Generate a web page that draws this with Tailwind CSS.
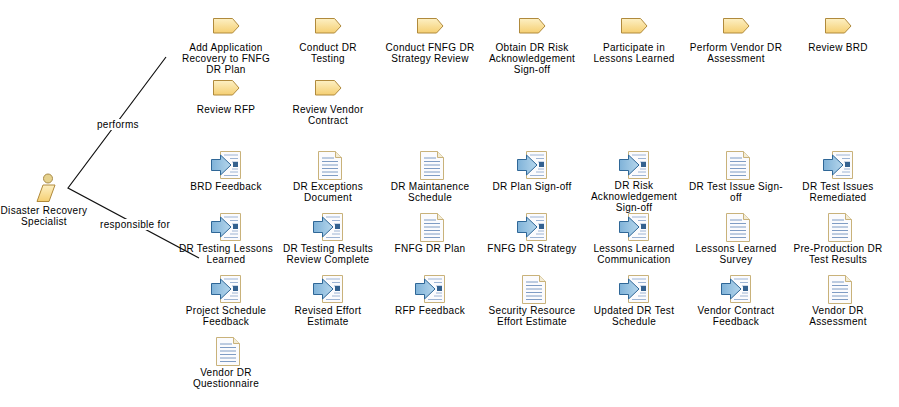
<!DOCTYPE html>
<html lang="en">
<head>
  <meta charset="UTF-8">
  <title>Disaster Recovery Specialist</title>
  <script src="https://cdn.jsdelivr.net/npm/@tailwindcss/browser@4"></script>
</head>
<body class="bg-white">

  <!-- shared icons -->
  <svg width="0" height="0" class="absolute">
    <defs>
      <linearGradient id="gold" x1="0" y1="0" x2="0" y2="1">
        <stop offset="0" stop-color="#fdf0c4"/>
        <stop offset="1" stop-color="#f5cf72"/>
      </linearGradient>
      <linearGradient id="blue" x1="0" y1="0" x2="1" y2="0">
        <stop offset="0" stop-color="#7fb2d8"/>
        <stop offset="1" stop-color="#b5d6ec"/>
      </linearGradient>
      <symbol id="task" viewBox="0 0 27 16">
        <path d="M.5 .5H19.5L26 8 19.5 15H.5Z" fill="url(#gold)" stroke="#b08a3c"/>
      </symbol>
      <symbol id="doc" viewBox="0 0 24 29">
        <path d="M.5 .5H17.5L23.5 6.5V28.5H.5Z" fill="#fbfbfd" stroke="#c9b27a"/>
        <path d="M17.5 .5V6.5H23.5" fill="#f3ecd6" stroke="#c9b27a"/>
        <path d="M4 7H16M4 10.5H20M4 14H20M4 17.5H20M4 21H20M4 24.5H20" stroke="#7f9cc4"/>
      </symbol>
      <symbol id="flow" viewBox="0 0 30 28">
        <path d="M9.5 .5H29.5V27.5H9.5Z" fill="#fbfbfd" stroke="#c9b27a"/>
        <path d="M13 4H27M19 7.500H27M21 11H27M21 18H27M19 21H27M13 24.500H27" stroke="#9db4d4"/>
        <path d="M22 11H27V16H22Z" fill="#34618f"/>
        <path d="M.5 8.500H9.500V4L20 14 9.500 24V19.500H.5Z" fill="url(#blue)" stroke="#2f6797"/>
      </symbol>
    </defs>
  </svg>

  <div class="relative w-[899px] h-[407px] overflow-hidden text-[10px] leading-[11px] tracking-[0.3px] text-black font-['Liberation_Sans',sans-serif]">

    <!-- the role, free on the canvas -->
    <div class="absolute left-0 top-[172px] w-[88px] flex flex-col items-center text-center">
      <svg width="20" height="31" viewBox="0 0 20 31" class="ml-[3px]">
        <circle cx="12" cy="6.500" r="4.500" fill="#e6d28e" stroke="#a98c4a"/>
        <path d="M7 13H19L13 29.500H1Z" fill="url(#gold)" stroke="#b08a3c"/>
      </svg>
      <div class="mt-[2px]">Disaster Recovery<br>Specialist</div>
    </div>

    <!-- tasks -->
    <div id="tasks" class="absolute left-[175px] top-[18px] grid grid-cols-[repeat(7,102px)] auto-rows-[62px]"></div>

    <!-- artifacts -->
    <div id="artifacts" class="absolute left-[175px] top-[151px] grid grid-cols-[repeat(7,102px)] auto-rows-[62px]"></div>

    <!-- relations -->
    <svg class="absolute inset-0" width="899" height="407">
      <path d="M166 57L68 188L199 258" fill="none" stroke="#111" stroke-width="1.200"/>
    </svg>
    <div class="absolute left-[96px] top-[119px] px-[1px] bg-white">performs</div>
    <div class="absolute left-[99px] top-[219px] px-[1px] bg-white">responsible for</div>
  </div>

  <script>
    const tasks = [
      "Add Application<br>Recovery to FNFG<br>DR Plan", "Conduct DR<br>Testing", "Conduct FNFG DR<br>Strategy Review",
      "Obtain DR Risk<br>Acknowledgement<br>Sign-off", "Participate in<br>Lessons Learned", "Perform Vendor DR<br>Assessment", "Review BRD",
      "Review RFP", "Review Vendor<br>Contract"
    ];
    const artifacts = [
      ["flow", "BRD Feedback"], ["doc", "DR Exceptions<br>Document"], ["doc", "DR Maintanence<br>Schedule"], ["flow", "DR Plan Sign-off"],
      ["flow", "DR Risk<br>Acknowledgement<br>Sign-off"], ["doc", "DR Test Issue Sign-<br>off"], ["flow", "DR Test Issues<br>Remediated"],
      ["flow", "DR Testing Lessons<br>Learned"], ["flow", "DR Testing Results<br>Review Complete"], ["doc", "FNFG DR Plan"], ["flow", "FNFG DR Strategy"],
      ["flow", "Lessons Learned<br>Communication"], ["doc", "Lessons Learned<br>Survey"], ["doc", "Pre-Production DR<br>Test Results"],
      ["flow", "Project Schedule<br>Feedback"], ["flow", "Revised Effort<br>Estimate"], ["flow", "RFP Feedback"], ["doc", "Security Resource<br>Effort Estimate"],
      ["flow", "Updated DR Test<br>Schedule"], ["flow", "Vendor Contract<br>Feedback"], ["doc", "Vendor DR<br>Assessment"],
      ["doc", "Vendor DR<br>Questionnaire"]
    ];

    document.getElementById("tasks").innerHTML = tasks.map(label => `
      <div class="flex flex-col items-center text-center whitespace-nowrap">
        <svg width="27" height="16"><use href="#task"/></svg>
        <div class="mt-[8px]">${label}</div>
      </div>
    `).join("");

    document.getElementById("artifacts").innerHTML = artifacts.map(([icon, label]) => `
      <div class="flex flex-col items-center text-center whitespace-nowrap">
        <div class="h-[29px] flex items-start">
          ${icon === "doc"
            ? '<svg width="24" height="29" class="ml-[3px]"><use href="#doc"/></svg>'
            : '<svg width="30" height="28"><use href="#flow"/></svg>'}
        </div>
        <div class="mt-[1px]">${label}</div>
      </div>
    `).join("");
  </script>

</body>
</html>
